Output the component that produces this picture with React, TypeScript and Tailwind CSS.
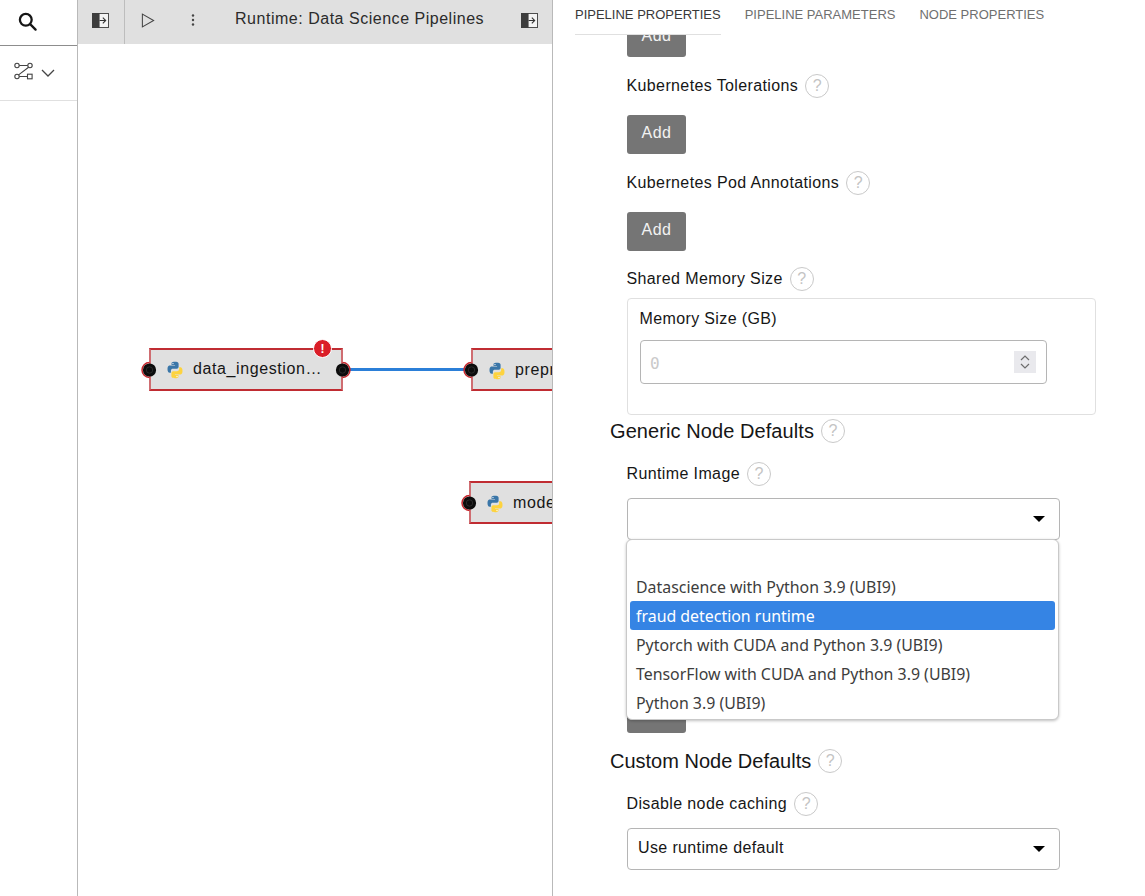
import { ReactNode } from "react";

const RUNTIMES = [
  "",
  "Datascience with Python 3.9 (UBI9)",
  "fraud detection runtime",
  "Pytorch with CUDA and Python 3.9 (UBI9)",
  "TensorFlow with CUDA and Python 3.9 (UBI9)",
  "Python 3.9 (UBI9)",
];

function PanelIcon() {
  return (
    <svg width="17" height="15" viewBox="0 0 18 16" className="block">
      <rect x="0.5" y="0.5" width="17" height="15" fill="#f4f4f4" stroke="#444" />
      <rect x="0" y="0" width="8" height="16" fill="#3d3d3d" />
      <path d="M8 8h6M11.5 5l3 3-3 3" fill="none" stroke="#333" strokeWidth="1.2" />
    </svg>
  );
}

function PythonLogo() {
  const d =
    "M11.9 1C7 1 7.4 3.1 7.4 3.1v2.2h4.7V6H5.2S2 5.6 2 10.7s2.8 4.9 2.8 4.9h1.7v-2.4s-.1-2.8 2.8-2.8h4.8s2.7 0 2.7-2.6V3.6S17 1 11.9 1z";
  return (
    <svg width="18" height="18" viewBox="0 0 24 24" className="shrink-0">
      <path d={d} fill="#3a76a8" />
      <path d={d} fill="#fdd33f" transform="rotate(180 12 12)" />
      <circle cx="9.3" cy="3.4" r="0.9" fill="#fff" />
      <circle cx="14.7" cy="20.6" r="0.9" fill="#fff" />
    </svg>
  );
}

// black port dot with the red arc on its outer side
function Port({ side }: { side: "left" | "right" }) {
  return (
    <svg
      width="17"
      height="17"
      viewBox="0 0 17 17"
      className={`absolute top-1/2 -translate-y-1/2 ${side === "left" ? "left-[-10px]" : "right-[-10px]"}`}
    >
      <path
        d={side === "left" ? "M8.5 1A7.5 7.5 0 0 0 8.5 16" : "M8.5 1A7.5 7.5 0 0 1 8.5 16"}
        fill="none"
        stroke="#c7262c"
        strokeWidth="1.5"
      />
      <circle cx="8.5" cy="8.5" r="6.6" fill="#0c0c0c" />
      <circle cx="8.5" cy="8.5" r="3.2" fill="none" stroke="#2a2a2a" />
    </svg>
  );
}

function PipelineNode({
  label,
  className,
  children,
}: {
  label: string;
  className: string;
  children?: ReactNode;
}) {
  return (
    <div
      className={`absolute flex h-[43px] items-center gap-[9px] border-2 border-x-[#cf6d71] border-y-[#c02c32] bg-[#e0e0e0] pl-[15px] text-base tracking-[0.6px] text-[#161616] ${className}`}
    >
      <PythonLogo />
      <span className="whitespace-nowrap pb-[2px]">{label}</span>
      {children}
    </div>
  );
}

function Help() {
  return (
    <span className="ml-[7px] flex h-[24px] w-[24px] shrink-0 items-center justify-center rounded-full border border-[#c9c9c9] text-base font-normal tracking-normal text-[#c4c4c4]">
      ?
    </span>
  );
}

function FieldLabel({ children, className = "" }: { children: ReactNode; className?: string }) {
  return (
    <div className={`-ml-[0.5px] flex h-[24px] items-center text-base tracking-[0.38px] text-[#161616] ${className}`}>
      <span className="whitespace-nowrap">{children}</span>
      <Help />
    </div>
  );
}

function AddButton({ className = "" }: { className?: string }) {
  return (
    <button className={`block h-[39px] w-[59px] rounded-[3px] bg-[#757575] pb-[3px] text-center text-base tracking-[0.5px] text-[#f2f2f2] ${className}`}>
      Add
    </button>
  );
}

function Caret() {
  return <span className="h-0 w-0 border-x-[6px] border-t-[6px] border-x-transparent border-t-black" />;
}

function SelectBox({ value }: { value?: string }) {
  return (
    <div className="flex h-[42px] w-[433px] items-center justify-between rounded-[4px] border border-[#b5b5b5] bg-white pl-[10px] pr-[14px] text-base tracking-[0.37px] text-[#161616]">
      <span className="pb-[2px]">{value}</span>
      <Caret />
    </div>
  );
}

export default function App() {
  return (
    <div className="flex h-[896px] w-[1145px] overflow-hidden bg-white font-['Liberation_Sans',Arial,sans-serif]">
      {/* left rail */}
      <aside className="w-[78px] shrink-0 border-r border-[#b9b9b9]">
        <div className="flex h-[46px] items-center justify-center border-b border-[#8d8d8d] pb-[3px] pr-[23px]">
          <svg width="19" height="19" viewBox="0 0 20 20" fill="none" stroke="#161616" strokeWidth="2.4">
            <circle cx="8.2" cy="8.2" r="6.2" />
            <path d="M12.8 12.8l5.7 5.7" strokeLinecap="round" />
          </svg>
        </div>
        <div className="flex h-[55px] items-center gap-[8px] border-b border-[#e0e0e0] pl-[14px]">
          <svg width="19" height="18" viewBox="0 0 19 18" fill="none" stroke="#444" strokeWidth="1.1" className="mb-[4px]">
            <circle cx="3" cy="3.5" r="2.2" />
            <circle cx="16" cy="3.5" r="2.2" />
            <circle cx="3" cy="14.5" r="2.2" />
            <rect x="13.5" y="12.2" width="4.6" height="4.6" />
            <path d="M5.2 3.5h8.6M5.2 14.5h8.3M14.6 5.2L4.6 12.9" />
          </svg>
          <svg width="14" height="8" viewBox="0 0 14 8" fill="none" stroke="#444" strokeWidth="1.3">
            <path d="M1 1l6 6 6-6" />
          </svg>
        </div>
      </aside>

      {/* canvas */}
      <section className="relative w-[475px] shrink-0 overflow-hidden border-r border-[#b9b9b9]">
        <header className="flex h-[44px] items-center bg-[#e0e0e0] text-[#2b2b2b]">
          <div className="flex h-full w-[47px] items-center justify-center border-r border-[#bdbdbd] pb-[4px] pr-[2px]">
            <PanelIcon />
          </div>
          <svg width="14" height="15" viewBox="0 0 14 16" fill="none" stroke="#444" strokeWidth="1.1" className="mb-[4px] ml-[16px]">
            <path d="M1 1.2v13.6L13 8z" />
          </svg>
          <svg width="4" height="14" viewBox="0 0 4 14" fill="#444" className="mb-[4px] ml-[36px]">
            <circle cx="2" cy="2.5" r="1.2" />
            <circle cx="2" cy="7" r="1.2" />
            <circle cx="2" cy="11.5" r="1.2" />
          </svg>
          <span className="ml-[40px] whitespace-nowrap pb-[6px] text-base tracking-[0.52px]">Runtime: Data Science Pipelines</span>
          <span className="mb-[4px] ml-auto mr-[14px]">
            <PanelIcon />
          </span>
        </header>

        <span className="absolute left-[264px] top-[368px] h-[3px] w-[130px] bg-[#2b7fd8]" />

        <PipelineNode label="data_ingestion…" className="left-[71px] top-[348px] w-[194px]">
          <Port side="left" />
          <Port side="right" />
          <span className="absolute right-[9px] top-[-11px] flex h-[19px] w-[19px] items-center justify-center rounded-full border border-white bg-[#da1e28] text-xs font-bold tracking-normal text-white">
            !
          </span>
        </PipelineNode>
        <PipelineNode label="preprocessing" className="left-[393px] top-[348px] w-[194px] pt-[2px]">
          <Port side="left" />
        </PipelineNode>
        <PipelineNode label="model_training" className="left-[391px] top-[481px] w-[194px] pt-[2px]">
          <Port side="left" />
        </PipelineNode>
      </section>

      {/* properties panel */}
      <section className="relative flex min-w-0 flex-1 flex-col">
        <nav className="flex h-[35px] shrink-0 pl-[22px] text-[13px] leading-[30px] text-[#6f6f6f]">
          <span className="h-[35px] whitespace-nowrap border-b border-[#e0e0e0] text-[#393939]">PIPELINE PROPERTIES</span>
          <span className="ml-[24px] whitespace-nowrap">PIPELINE PARAMETERS</span>
          <span className="ml-[24px] whitespace-nowrap">NODE PROPERTIES</span>
        </nav>

        <div className="min-h-0 flex-1 overflow-hidden">
          <div className="mt-[-17px] pl-[74px]">
            <AddButton />
            <FieldLabel className="mt-[17px]">Kubernetes Tolerations</FieldLabel>
            <AddButton className="mt-[17px]" />
            <FieldLabel className="mt-[17px]">Kubernetes Pod Annotations</FieldLabel>
            <AddButton className="mt-[17px]" />
            <FieldLabel className="mt-[16px]">Shared Memory Size</FieldLabel>
            <div className="mt-[7px] h-[117px] w-[469px] rounded-[4px] border border-[#e0e0e0] px-[12px] pt-[10px]">
              <div className="-ml-[0.5px] text-base leading-[20px] tracking-[0.37px] text-[#161616]">Memory Size (GB)</div>
              <div className="mt-[11px] flex h-[44px] w-[407px] items-center justify-between rounded-[4px] border border-[#b5b5b5] pl-[9px] pr-[10px]">
                <span className="pt-[3px] font-['DejaVu_Sans_Mono',monospace] text-base text-[#c9c9c9]">0</span>
                <span className="flex h-[22px] w-[22px] items-center justify-center bg-[#e9e9ed]">
                  <svg width="12" height="16" viewBox="0 0 12 16" fill="none" stroke="#6d6d6d" strokeWidth="1.2">
                    <path d="M2 6l4-4 4 4M2 10l4 4 4-4" />
                  </svg>
                </span>
              </div>
            </div>

            <div className="-ml-[17px] mt-[4px] flex h-[24px] items-center text-[20px] tracking-[0.08px] text-[#161616]">
              Generic Node Defaults
              <Help />
            </div>
            <FieldLabel className="mt-[19px]">Runtime Image</FieldLabel>
            <div className="relative mt-[12px]">
              <SelectBox />
              <AddButton className="mt-[154px]" />
              <ul className="absolute left-[-1px] top-[41px] h-[181px] w-[433px] rounded-[6px] border border-[#c9c9c9] bg-white px-[3px] pt-[3px] font-['Noto_Sans',sans-serif] text-[15.9px] text-[#3d3d3d] shadow-[0_1px_3px_rgba(0,0,0,0.25)]">
                {RUNTIMES.map((name, i) => (
                  <li
                    key={i}
                    className={`flex h-[29px] items-center rounded-[3px] px-[6px] pt-[2px] ${
                      name === "fraud detection runtime" ? "bg-[#3584e4] text-white" : ""
                    }`}
                  >
                    {name}
                  </li>
                ))}
              </ul>
            </div>

            <div className="-ml-[17px] mt-[16px] flex h-[24px] items-center text-[20px] text-[#161616]">
              Custom Node Defaults
              <Help />
            </div>
            <FieldLabel className="mt-[19px]">Disable node caching</FieldLabel>
            <div className="mt-[12px]">
              <SelectBox value="Use runtime default" />
            </div>
          </div>
        </div>
      </section>
    </div>
  );
}
